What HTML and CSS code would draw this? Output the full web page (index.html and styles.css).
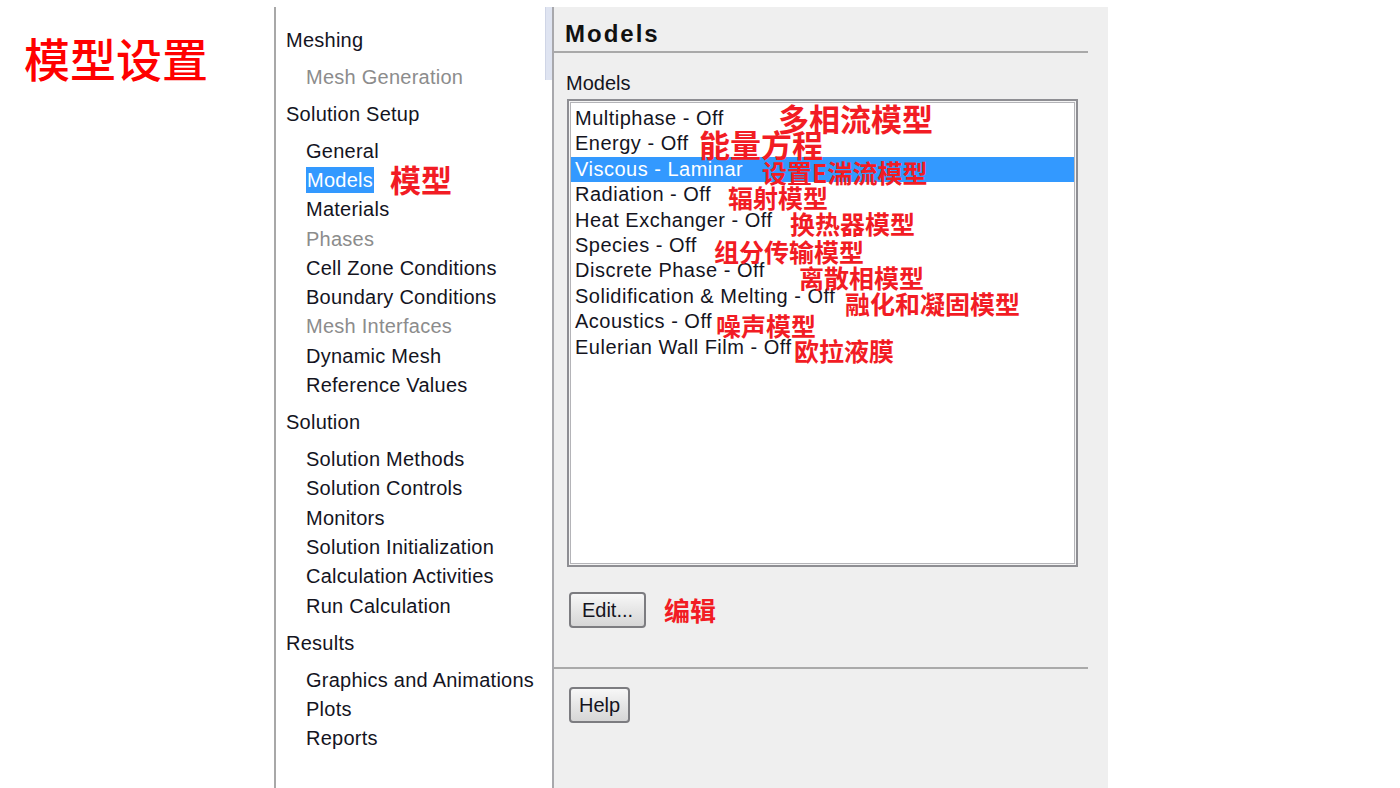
FILE: index.html
```html
<!DOCTYPE html>
<html lang="zh">
<head>
<meta charset="utf-8">
<title>模型设置</title>
<link rel="stylesheet" href="styles.css">
</head>
<body>
<div class="page">
  <div class="slide-title">模型设置</div>

  <div class="tree">
    <div class="thumb"></div>
    <div class="grp">Meshing</div>
    <div class="item dis">Mesh Generation</div>
    <div class="grp">Solution Setup</div>
    <div class="item">General</div>
    <div class="item"><span class="sel">Models</span><span class="note note-tree">模型</span></div>
    <div class="item">Materials</div>
    <div class="item dis">Phases</div>
    <div class="item">Cell Zone Conditions</div>
    <div class="item">Boundary Conditions</div>
    <div class="item dis">Mesh Interfaces</div>
    <div class="item">Dynamic Mesh</div>
    <div class="item">Reference Values</div>
    <div class="grp">Solution</div>
    <div class="item">Solution Methods</div>
    <div class="item">Solution Controls</div>
    <div class="item">Monitors</div>
    <div class="item">Solution Initialization</div>
    <div class="item">Calculation Activities</div>
    <div class="item">Run Calculation</div>
    <div class="grp">Results</div>
    <div class="item">Graphics and Animations</div>
    <div class="item">Plots</div>
    <div class="item">Reports</div>
  </div>

  <div class="panel">
    <div class="panel-head">Models</div>
    <div class="label">Models</div>
    <div class="listbox">
      <div class="list-inner">
        <div class="row">Multiphase - Off</div>
        <div class="row">Energy - Off</div>
        <div class="row active">Viscous - Laminar</div>
        <div class="row">Radiation - Off</div>
        <div class="row">Heat Exchanger - Off</div>
        <div class="row">Species - Off</div>
        <div class="row">Discrete Phase - Off</div>
        <div class="row">Solidification &amp; Melting - Off</div>
        <div class="row">Acoustics - Off</div>
        <div class="row">Eulerian Wall Film - Off</div>
      </div>
      <span class="note big n1">多相流模型</span>
      <span class="note big n2">能量方程</span>
      <span class="note n3">设置E湍流模型</span>
      <span class="note n4">辐射模型</span>
      <span class="note n5">换热器模型</span>
      <span class="note n6">组分传输模型</span>
      <span class="note n7">离散相模型</span>
      <span class="note n8">融化和凝固模型</span>
      <span class="note n9">噪声模型</span>
      <span class="note n10">欧拉液膜</span>
    </div>
    <div class="btn-row">
      <button class="btn btn-edit">Edit...</button>
      <span class="note-inline">编辑</span>
    </div>
    <div class="sep"></div>
    <div class="btn-row help-row">
      <button class="btn">Help</button>
    </div>
  </div>
</div>
</body>
</html>
```
FILE: styles.css
```css
html, body {
  margin: 0;
  padding: 0;
  background: #ffffff;
}
body {
  font-family: "Liberation Sans", Arial, sans-serif;
  color: #14141e;
}
.page {
  display: flex;
  align-items: flex-start;
  height: 788px;
  overflow: hidden;
}
.slide-title {
  width: 250px;
  padding: 34px 0 0 24px;
  font-family: "Noto Sans CJK SC", sans-serif;
  font-size: 46px;
  line-height: 1;
  color: #ff0000;
  font-weight: 500;
}
.tree {
  position: relative;
  margin-top: 7px;
  height: 781px;
  padding: 11px 0 0 10px;
  box-sizing: border-box;
  width: 280px;
  background: #ffffff;
  border-left: 2px solid #a8a8a8;
  border-right: 2px solid #a8a8ac;
  font-size: 20px;
  letter-spacing: 0.25px;
}
.thumb {
  position: absolute;
  right: 0;
  top: 0;
  width: 6px;
  height: 73px;
  background: #dfe4f1;
  border-left: 1px solid #cfd5e6;
}
.grp {
  height: 44.7px;
  line-height: 44.7px;
  white-space: nowrap;
}
.item {
  position: relative;
  height: 29.3px;
  line-height: 29.3px;
  padding-left: 20px;
  white-space: nowrap;
}
.item.dis {
  color: #8c8c8c;
}
.sel {
  background: #3399ff;
  color: #ffffff;
  padding: 2px 1px;
}
.note {
  position: absolute;
  font-family: "Noto Sans CJK SC", sans-serif;
  font-weight: 700;
  font-size: 25px;
  line-height: 1;
  letter-spacing: 0;
  color: #f21c24;
  white-space: nowrap;
}
.note.big {
  font-size: 31px;
}
.note-tree {
  font-size: 31px;
  left: 104px;
  top: -3px;
}
.panel {
  margin-top: 7px;
  width: 554px;
  height: 781px;
  background: #efefef;
  display: flex;
  flex-direction: column;
}
.panel-head {
  height: 44px;
  margin-right: 20px;
  padding-left: 11px;
  border-bottom: 2px solid #a9a9a9;
  font-size: 24px;
  font-weight: 700;
  letter-spacing: 2px;
  line-height: 54px;
  color: #111;
}
.label {
  padding-left: 12px;
  margin-top: 14px;
  height: 32px;
  line-height: 32px;
  font-size: 20px;
}
.listbox {
  position: relative;
  margin-left: 13px;
  width: 511px;
  height: 468px;
  box-sizing: border-box;
  border: 2px solid #8e8e93;
  padding: 1px;
  background: #f4f4f4;
}
.list-inner {
  height: 100%;
  box-sizing: border-box;
  border: 1px solid #b4b4b8;
  background: #ffffff;
  padding-top: 3px;
}
.row {
  height: 25.4px;
  line-height: 25.4px;
  padding-left: 4px;
  font-size: 20px;
  letter-spacing: 0.5px;
  white-space: nowrap;
}
.row.active {
  background: #3399ff;
  color: #ffffff;
}
.n1 { left: 209px; top: 1px; }
.n2 { left: 130px; top: 27px; }
.n3 { left: 193px; top: 59px; }
.n4 { left: 159px; top: 84px; }
.n5 { left: 221px; top: 110px; }
.n6 { left: 145px; top: 138px; }
.n7 { left: 230px; top: 164px; }
.n8 { left: 276px; top: 190px; }
.n9 { left: 147px; top: 212px; }
.n10 { left: 225px; top: 237px; }
.btn-row {
  display: flex;
  align-items: center;
  padding-left: 15px;
  margin-top: 25px;
}
.btn {
  height: 36px;
  padding: 0 8px;
  border: 2px solid #7c7c80;
  border-radius: 4px;
  background: linear-gradient(#f7f7f7, #e6e6e6 50%, #d6d6d6);
  font-family: "Liberation Sans", Arial, sans-serif;
  font-size: 20px;
  color: #14141e;
}
.btn-edit {
  width: 77px;
  padding: 0;
}
.note-inline {
  margin-left: 18px;
  font-family: "Noto Sans CJK SC", sans-serif;
  font-weight: 700;
  font-size: 26px;
  color: #f21c24;
  line-height: 1;
}
.sep {
  margin-top: 39px;
  margin-right: 20px;
  height: 2px;
  background: #aaaaaa;
}
.help-row {
  margin-top: 18px;
}
```
